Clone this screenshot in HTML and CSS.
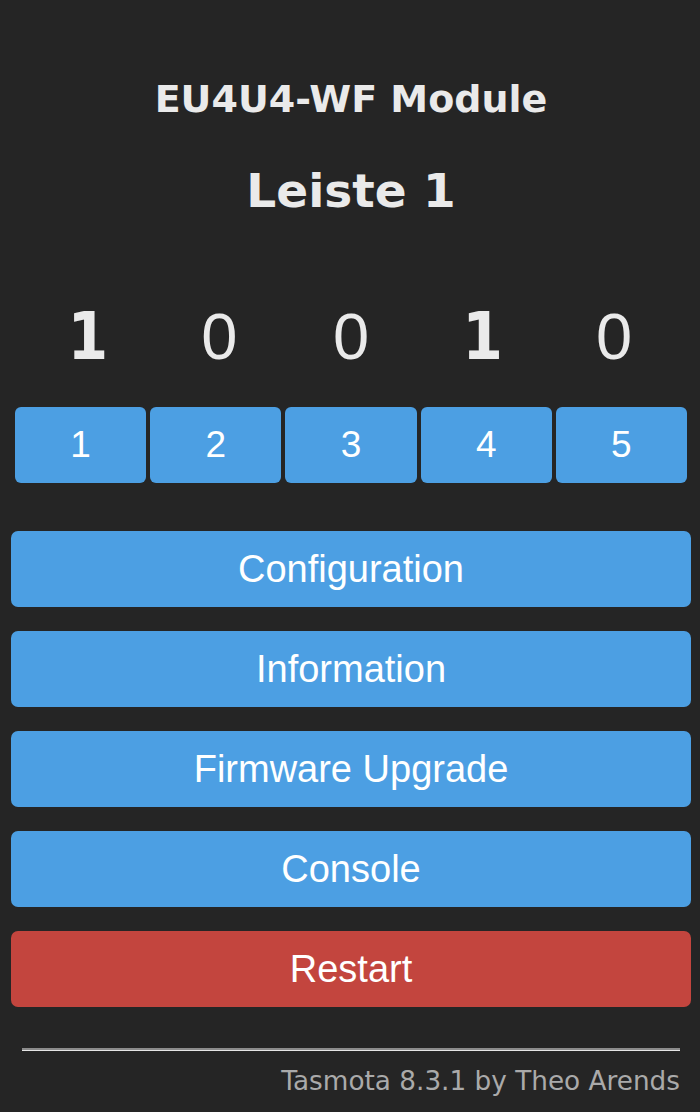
FILE: index.html
```html
<!DOCTYPE html>
<html lang="en">
<head>
    <meta charset="UTF-8">
    <meta name="viewport" content="width=device-width, initial-scale=1.0">
    <title>Leiste 1 - Main Menu</title>
    <link rel="stylesheet" href="styles.css">
</head>
<body>

    <div class="page">
        <h3 class="module">EU4U4-WF Module</h3>
        <h2 class="device">Leiste 1</h2>

        <!-- Relay states -->
        <div class="states">
            <div class="state on">1</div>
            <div class="state">0</div>
            <div class="state">0</div>
            <div class="state on">1</div>
            <div class="state">0</div>
        </div>

        <!-- Toggle buttons -->
        <div class="toggles">
            <button class="btn small">1</button>
            <button class="btn small">2</button>
            <button class="btn small">3</button>
            <button class="btn small">4</button>
            <button class="btn small">5</button>
        </div>

        <div class="menu">
            <button class="btn">Configuration</button>
            <button class="btn">Information</button>
            <button class="btn">Firmware Upgrade</button>
            <button class="btn">Console</button>
            <button class="btn danger">Restart</button>
        </div>

        <div class="footer">
            <hr>
            <a href="#" class="credit">Tasmota 8.3.1 by Theo Arends</a>
        </div>
    </div>

</body>
</html>
```

FILE: styles.css
```css
body {
    margin: 0;
    background-color: #252525;
    color: #eaeaea;
    font-family: "DejaVu Sans", Verdana, sans-serif;
}

.page {
    padding: 77px 9px 0 11px;
    text-align: center;
}

.module {
    margin: 0;
    font-size: 38px;
    line-height: 44px;
    font-weight: bold;
}

.device {
    margin: 42px 0 0;
    font-size: 47px;
    line-height: 56px;
    font-weight: bold;
}

.states {
    display: grid;
    grid-template-columns: repeat(5, 1fr);
    margin: 80px 11px 0;
}

.state {
    font-family: "Liberation Sans", Arial, sans-serif;
    font-size: 65px;
    line-height: 76px;
}

.state.on {
    font-family: "DejaVu Sans", Verdana, sans-serif;
    font-stretch: condensed;
    font-weight: bold;
}

.toggles {
    display: grid;
    grid-template-columns: repeat(5, 1fr);
    gap: 4px;
    padding: 0 4px;
    margin-top: 32px;
}

.btn {
    display: block;
    width: 100%;
    height: 76px;
    border: none;
    border-radius: 7px;
    background-color: #4c9fe3;
    color: #fff;
    font-family: "Liberation Sans", Arial, sans-serif;
    font-size: 38px;
    cursor: pointer;
}

.btn.small {
    border-radius: 6px;
    font-size: 37px;
}

.btn.danger {
    background-color: #c3453e;
}

.menu {
    display: flex;
    flex-direction: column;
    gap: 24px;
    margin-top: 48px;
}

.footer {
    text-align: right;
    padding: 0 11px;
}

.footer hr {
    margin: 41px 0 15px;
    height: 0;
    border: none;
    border-top: 2px solid #8c8c8c;
    border-bottom: 1px solid #e6e6e6;
}

.credit {
    display: block;
    color: #aaa;
    text-decoration: none;
    font-size: 26.3px;
    line-height: 30px;
}
```
